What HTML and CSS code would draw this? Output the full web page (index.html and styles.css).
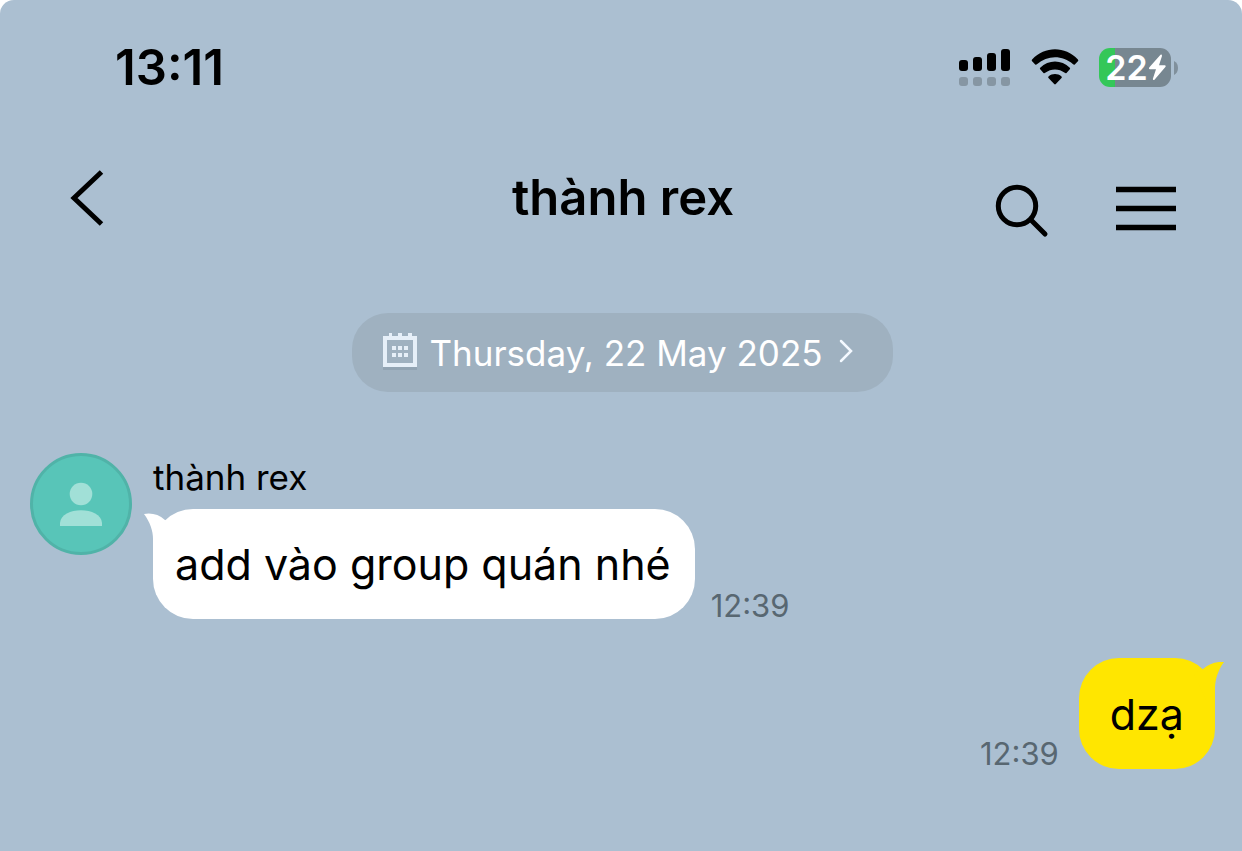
FILE: index.html
```html
<!DOCTYPE html>
<html lang="vi">
<head>
<meta charset="utf-8">
<meta name="viewport" content="width=device-width, initial-scale=1">
<title>thành rex</title>
<link rel="stylesheet" href="styles.css">
</head>
<body>
<div class="screen">
  <div class="status">
    <time class="clock">13:11</time>
    <div class="indicators">
      <svg class="signal" width="52" height="38" viewBox="0 0 52 38" role="img" aria-label="Signal">
        <rect x="0" y="11" width="9" height="11" rx="3"/>
        <rect x="14" y="8" width="9" height="14" rx="3"/>
        <rect x="28" y="4" width="9" height="18" rx="3"/>
        <rect x="42" y="0" width="9" height="22" rx="3"/>
        <g fill="#8696a3">
          <rect x="0" y="28" width="9" height="9" rx="3"/>
          <rect x="14" y="28" width="9" height="9" rx="3"/>
          <rect x="28" y="28" width="9" height="9" rx="3"/>
          <rect x="42" y="28" width="9" height="9" rx="3"/>
        </g>
      </svg>
      <svg class="wifi" width="48" height="38" viewBox="0 0 48 38" role="img" aria-label="Wi-Fi">
        <path d="M1.100 10.400C14-3.200 34-3.200 46.900 10.400Q47.700 11.300 46.900 12.200L43.800 15.400Q43 16.100 42.100 15.300C31.500 6 16.500 6 5.900 15.300Q5 16.100 4.200 15.400L1.100 12.200Q.3 11.300 1.100 10.400Z"/>
        <path d="M9.200 18.700C17.500 10.500 30.500 10.500 38.800 18.700Q39.600 19.500 38.800 20.300L35.500 23.900Q34.700 24.600 33.800 23.800C28 19.300 20 19.300 14.200 23.800Q13.300 24.600 12.500 23.900L9.200 20.300Q8.400 19.500 9.200 18.700Z"/>
        <path d="M17.500 27.400C21.300 24.300 26.700 24.300 30.500 27.400Q31.300 28.200 30.500 29.100L24.800 35.100Q24 35.900 23.200 35.100L17.500 29.100Q16.700 28.200 17.500 27.400Z"/>
      </svg>
      <div class="battery">
        <div class="cell">
          <span>22</span>
          <svg width="19" height="27" viewBox="0 0 19 27" aria-hidden="true"><path d="M12.500 .8 1.200 13.600Q.4 15.300 1.800 15.300H8L4.800 25Q5 26.700 6.500 25.700L17.600 12.800Q18.200 11.300 16.800 11.200H11L14 2Q14 .1 12.500 .8Z" fill="#fff"/></svg>
        </div>
        <svg width="4" height="14" viewBox="0 0 4 14" aria-hidden="true"><path d="M0 0Q4 2 4 7T0 14Z" fill="#80909c"/></svg>
      </div>
    </div>
  </div>

  <header class="nav">
    <button class="icon-button" aria-label="Back">
      <svg width="34" height="56" viewBox="0 0 34 56"><path d="M31.500 2 4 28 31.500 54" fill="none" stroke="#000" stroke-width="5"/></svg>
    </button>
    <h1 class="title">thành rex</h1>
    <div class="actions">
      <button class="icon-button" aria-label="Search">
        <svg width="54" height="54" viewBox="0 0 54 54"><g fill="none" stroke="#000" stroke-width="5" stroke-linecap="round"><circle cx="22" cy="22" r="18.700"/><path d="M36 36 50 50"/></g></svg>
      </button>
      <button class="icon-button" aria-label="Menu">
        <svg width="60" height="54" viewBox="0 0 60 54"><path d="M0 5.500H60M0 24.500H60M0 43.500H60" fill="none" stroke="#000" stroke-width="5.500"/></svg>
      </button>
    </div>
  </header>

  <main class="chat">
    <button class="date">
      <svg width="34" height="40" viewBox="0 0 34 40" aria-hidden="true">
        <rect x="0" y="6" width="34" height="31" fill="#8597a6" opacity=".5"/>
        <rect x="2" y="5" width="30" height="27" fill="#9fb1c0" stroke="#e6eff8" stroke-width="4"/>
        <g fill="#e6eff8"><path d="M6 0h3v4H6zM15 0h4v4h-4zM25 0h4v4h-4z"/><path d="M9 13h4v4H9zM15 13h4v4h-4zM21 13h4v4h-4zM9 20h4v4H9zM15 20h4v4h-4zM21 20h4v4h-4z"/></g>
      </svg>
      <span>Thursday, 22 May 2025</span>
      <svg class="more" width="14" height="28" viewBox="0 0 14 28" aria-hidden="true"><path d="M2 2 12 12 2 22" fill="none" stroke="#f4f9ff" stroke-width="2.500" stroke-linecap="round"/></svg>
    </button>

    <article class="message">
      <svg class="avatar" viewBox="0 0 102 102" role="img" aria-label="thành rex">
        <circle cx="51" cy="51" r="49.500" fill="#58c5b8" stroke="#50b3a8" stroke-width="3"/>
        <circle cx="51" cy="41" r="11.300" fill="#a1e0d7"/>
        <path d="M30 73V70C31 53 71 53 72 70V73Z" fill="#a1e0d7"/>
      </svg>
      <div class="content">
        <div class="sender">thành rex</div>
        <div class="line">
          <div class="bubble">
            <svg class="tail" width="30" height="38" viewBox="0 0 30 38" aria-hidden="true"><path d="M0 1Q12-1 21 7L30 12 18 38H9V26C9 18 6 9 0 1Z" fill="#fff"/></svg>
            add vào group quán nhé
          </div>
          <time class="time">12:39</time>
        </div>
      </div>
    </article>

    <article class="message own">
      <div class="line">
        <time class="time">12:39</time>
        <div class="bubble">
          <svg class="tail" width="30" height="38" viewBox="0 0 30 38" aria-hidden="true"><path d="M30 0Q18-1 9 7L0 12 12 38H21V26C21 18 24 8 30 0Z" fill="#ffe600"/></svg>
          dzạ
        </div>
      </div>
    </article>
  </main>
</div>
</body>
</html>
```
FILE: styles.css
```css
* { box-sizing: border-box; }
body {
  margin: 0;
  background: #fff;
  color: #000;
  font-family: Inter, "Noto Sans", sans-serif;
}
svg { display: block; flex: none; }
button {
  border: 0;
  padding: 0;
  background: none;
  color: inherit;
  font: inherit;
  cursor: pointer;
}
.screen {
  min-height: 100vh;
  background: #abbfd1;
  border-radius: 14px 14px 0 0;
}
.status {
  display: flex;
  align-items: center;
  justify-content: space-between;
  height: 135px;
  padding: 0 64px 0 115px;
}
.clock {
  font-size: 49px;
  font-weight: 600;
}
.indicators {
  display: flex;
  align-items: center;
  gap: 20px;
}
.battery {
  display: flex;
  align-items: center;
  gap: 3px;
}
.cell {
  display: flex;
  align-items: center;
  justify-content: center;
  width: 72px;
  height: 39px;
  padding-left: 2px;
  border-radius: 11px;
  background: linear-gradient(90deg, #34c759 16px, #778791 16px);
  color: #fff;
  font-size: 34px;
  font-weight: 600;
}
.nav {
  display: grid;
  grid-template-columns: 1fr auto 1fr;
  align-items: center;
  height: 125px;
  padding: 0 66px 0 70px;
}
.icon-button { justify-self: start; }
.title {
  margin: 0;
  font-size: 49px;
  font-weight: 600;
  line-height: 60px;
}
.actions {
  display: flex;
  justify-content: flex-end;
  gap: 67px;
  padding-top: 26px;
}
.chat {
  display: flex;
  flex-direction: column;
  padding: 53px 27px 40px 30px;
}
.date {
  display: flex;
  align-items: center;
  align-self: center;
  gap: 12px;
  height: 79px;
  padding: 0 40px 0 31px;
  border-radius: 36px;
  background: #9fb1c0;
  color: #fff;
  font-size: 35px;
}
.more { margin-left: 4px; }
.message {
  display: flex;
  gap: 21px;
  margin-top: 61px;
}
.avatar {
  width: 102px;
  height: 102px;
}
.sender {
  padding-top: 3px;
  font-size: 35px;
  line-height: 42px;
}
.line {
  display: flex;
  align-items: flex-end;
  gap: 16px;
}
.content .line { margin-top: 11px; }
.bubble {
  position: relative;
  padding: 28px 24px 28px 22px;
  border-radius: 40px;
  background: #fff;
  font-size: 43px;
  line-height: 54px;
}
.tail {
  position: absolute;
  top: 4px;
  left: -9px;
}
.time {
  color: #586771;
  font-size: 31px;
  line-height: 26px;
}
.own {
  justify-content: flex-end;
  margin-top: 39px;
}
.own .line { gap: 20px; }
.own .time { padding-bottom: 2px; }
.own .bubble {
  padding: 29px 31px 28px 31px;
  background: #ffe600;
}
.own .tail {
  right: -9px;
  left: auto;
}
```
